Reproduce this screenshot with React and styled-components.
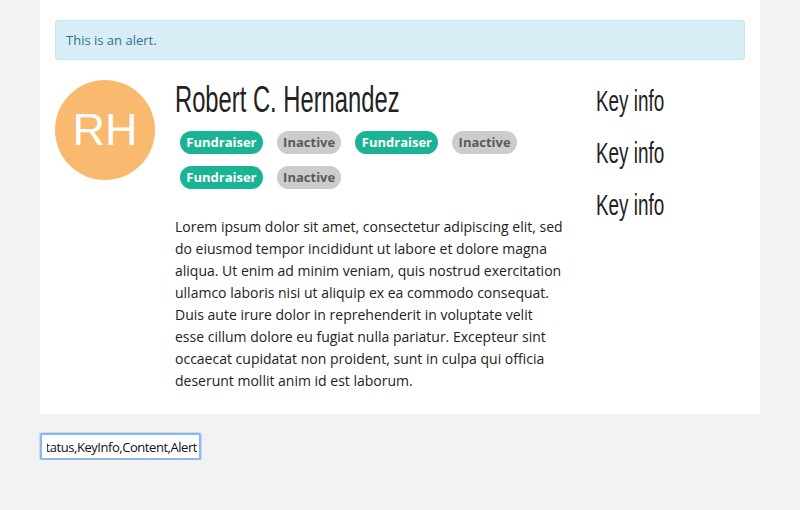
import React from 'react';
import styled, { createGlobalStyle } from 'styled-components';

const GlobalStyle = createGlobalStyle`
  body {
    margin: 0;
    background: #f2f2f2;
    font-family: 'Open Sans', 'Liberation Sans', sans-serif;
    color: #222;
  }
`;

const statuses = [
  { label: 'Fundraiser', active: true },
  { label: 'Inactive', active: false },
  { label: 'Fundraiser', active: true },
  { label: 'Inactive', active: false },
  { label: 'Fundraiser', active: true },
  { label: 'Inactive', active: false },
];

const App = () => (
  <>
    <GlobalStyle />
    <Page>
      <Panel>
        <Alert>This is an alert.</Alert>
        <Profile>
          <Avatar>RH</Avatar>
          <Main>
            <Name>
              <Condensed scale={0.66}>Robert C. Hernandez</Condensed>
            </Name>
            <Badges>
              {statuses.map((s, i) => (
                <Badge key={i} active={s.active}>
                  {s.label}
                </Badge>
              ))}
            </Badges>
            <Content>
              Lorem ipsum dolor sit amet, consectetur adipiscing elit, sed do
              eiusmod tempor incididunt ut labore et dolore magna aliqua. Ut
              enim ad minim veniam, quis nostrud exercitation ullamco laboris
              nisi ut aliquip ex ea commodo consequat. Duis aute irure dolor in
              reprehenderit in voluptate velit esse cillum dolore eu fugiat
              nulla pariatur. Excepteur sint occaecat cupidatat non proident,
              sunt in culpa qui officia deserunt mollit anim id est laborum.
            </Content>
          </Main>
          <KeyInfo>
            {[0, 1, 2].map((i) => (
              <KeyItem key={i}>
                <Condensed scale={0.63}>Key info</Condensed>
              </KeyItem>
            ))}
          </KeyInfo>
        </Profile>
      </Panel>
      <FieldInput>
        <FieldText>
          <span>Avatar,Name,Status,KeyInfo,Content,Alert</span>
        </FieldText>
      </FieldInput>
    </Page>
  </>
);

export default App;

const Page = styled.div`
  width: 720px;
  margin: 0 40px;
`;

const Panel = styled.div`
  background: #fff;
  padding: 20px 15px 22px;
`;

const Alert = styled.div`
  background: #d9edf7;
  border: 1px solid #bce8f1;
  border-radius: 3px;
  color: #31708f;
  font-size: 13px;
  line-height: 18px;
  padding: 10px;
`;

const Profile = styled.div`
  display: flex;
  margin-top: 20px;
`;

const Avatar = styled.div`
  flex: 0 0 100px;
  height: 100px;
  border-radius: 50%;
  background: #f9b96e;
  color: #fff;
  font-family: 'Liberation Sans', Arial, sans-serif;
  font-size: 45px;
  display: flex;
  align-items: center;
  justify-content: center;
`;

const Main = styled.div`
  width: 390px;
  margin-left: 20px;
`;

const Condensed = styled.span`
  display: inline-block;
  white-space: nowrap;
  transform: scaleX(${(p) => p.scale});
  transform-origin: left center;
`;

const Name = styled.h1`
  margin: 0;
  height: 40px;
  font-family: 'Liberation Sans', Arial, sans-serif;
  font-weight: 400;
  font-size: 36px;
  line-height: 40px;
  color: #222;
  white-space: nowrap;
`;

const Badges = styled.div`
  display: flex;
  flex-wrap: wrap;
  gap: 12px 14px;
  margin: 11px 0 0 5px;
  width: 360px;
`;

const Badge = styled.span`
  display: inline-block;
  height: 23px;
  line-height: 23px;
  padding: 0 6.3px;
  border-radius: 12px;
  font-size: 13px;
  font-weight: 700;
  background: ${(p) => (p.active ? '#1ab394' : '#cccccc')};
  color: ${(p) => (p.active ? '#fff' : '#5a5a5a')};
`;

const Content = styled.p`
  margin: 27px 0 0;
  font-size: 14px;
  line-height: 22px;
  color: #222;
`;

const KeyInfo = styled.div`
  margin-left: 31px;
  display: flex;
  flex-direction: column;
  gap: 18px;
  padding-top: 4px;
`;

const KeyItem = styled.div`
  font-family: 'Liberation Sans', Arial, sans-serif;
  font-size: 30px;
  line-height: 34px;
  color: #222;
  white-space: nowrap;
`;

const FieldInput = styled.div`
  box-sizing: border-box;
  margin-top: 19px;
  width: 161px;
  height: 27px;
  border: 2px solid #8bb8ef;
  border-radius: 2px;
  box-shadow: 0 0 1px 1px #c3dbf7;
  background: #fff;
  display: flex;
  align-items: center;
  padding: 0 2px 0 5px;
`;

const FieldText = styled.div`
  flex: 1;
  display: flex;
  justify-content: flex-end;
  overflow: hidden;
  font-size: 13px;
  letter-spacing: -0.45px;
  color: #111;
  white-space: nowrap;
`;
